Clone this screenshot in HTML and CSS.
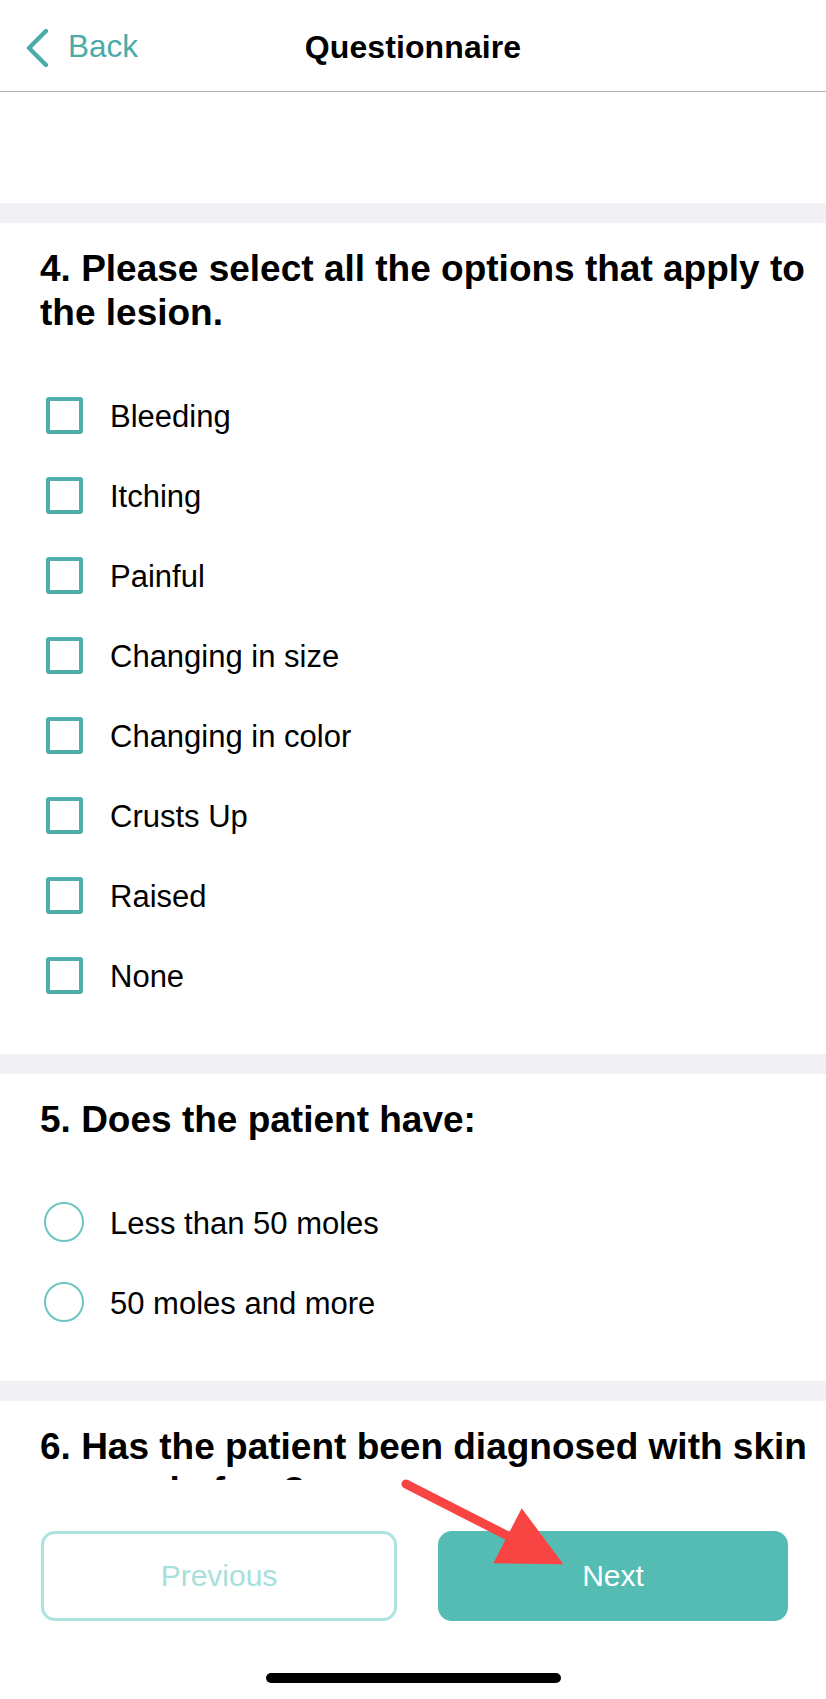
FILE: index.html
```html
<!DOCTYPE html>
<html lang="en">
<head>
<meta charset="utf-8">
<title>Questionnaire</title>
<link rel="stylesheet" href="styles.css">
</head>
<body>
<div class="app">
  <header class="navbar">
    <div class="nav-left">
      <svg class="chevron" viewBox="0 0 28 42" width="28" height="42" aria-hidden="true">
        <polyline points="21,4 4,21 21,38" fill="none" stroke="#4aaba8" stroke-width="4.4" stroke-linecap="round" stroke-linejoin="round"/>
      </svg>
      <span class="back-label">Back</span>
    </div>
    <h1 class="nav-title">Questionnaire</h1>
    <div class="nav-right"></div>
  </header>

  <main class="content">
    <div class="spacer"></div>
    <div class="band"></div>

    <section class="question">
      <h2 class="q-title">4. Please select all the options that apply to the lesion.</h2>
      <ul class="options">
        <li class="option"><span class="icon"><span class="checkbox"></span></span><span class="label">Bleeding</span></li>
        <li class="option"><span class="icon"><span class="checkbox"></span></span><span class="label">Itching</span></li>
        <li class="option"><span class="icon"><span class="checkbox"></span></span><span class="label">Painful</span></li>
        <li class="option"><span class="icon"><span class="checkbox"></span></span><span class="label">Changing in size</span></li>
        <li class="option"><span class="icon"><span class="checkbox"></span></span><span class="label">Changing in color</span></li>
        <li class="option"><span class="icon"><span class="checkbox"></span></span><span class="label">Crusts Up</span></li>
        <li class="option"><span class="icon"><span class="checkbox"></span></span><span class="label">Raised</span></li>
        <li class="option"><span class="icon"><span class="checkbox"></span></span><span class="label">None</span></li>
      </ul>
    </section>

    <div class="band"></div>

    <section class="question">
      <h2 class="q-title">5. Does the patient have:</h2>
      <ul class="options">
        <li class="option"><span class="icon"><span class="radio"></span></span><span class="label">Less than 50 moles</span></li>
        <li class="option"><span class="icon"><span class="radio"></span></span><span class="label">50 moles and more</span></li>
      </ul>
    </section>

    <div class="band"></div>

    <section class="question">
      <h2 class="q-title">6. Has the patient been diagnosed with skin cancer before?</h2>
    </section>
  </main>

  <footer class="footer">
    <div class="buttons">
      <button class="btn btn-prev" type="button">Previous</button>
      <button class="btn btn-next" type="button">Next</button>
    </div>
    <div class="home-indicator"></div>
    <svg class="annotation" viewBox="0 0 190 110" width="190" height="110" aria-hidden="true">
      <line x1="16" y1="19" x2="118" y2="71" stroke="#f94444" stroke-width="9" stroke-linecap="round"/>
      <polygon points="131.7,43.3 103.3,98.3 173.3,99.3" fill="#f94444"/>
    </svg>
  </footer>
</div>
</body>
</html>
```

FILE: styles.css
```css
* {
  box-sizing: border-box;
}

html, body {
  margin: 0;
  padding: 0;
  background: #ffffff;
}

body {
  font-family: "Liberation Sans", Arial, sans-serif;
  color: #000;
}

.app {
  width: 826px;
  height: 1699px;
  display: flex;
  flex-direction: column;
  overflow: hidden;
  position: relative;
}

/* Header */
.navbar {
  flex: 0 0 92px;
  height: 92px;
  display: grid;
  grid-template-columns: 1fr auto 1fr;
  align-items: center;
  border-bottom: 1px solid #b4b4b4;
  padding-top: 3px;
}

.nav-left {
  display: flex;
  align-items: center;
  padding-left: 25px;
}

.chevron {
  display: block;
  margin-top: 1px;
}

.back-label {
  margin-left: 15px;
  font-size: 31.5px;
  color: #4aaba8;
  line-height: 1;
}

.nav-title {
  margin: 0;
  font-size: 32px;
  font-weight: 700;
  line-height: 1;
  letter-spacing: 0.1px;
}

/* Content */
.content {
  flex: 1 1 auto;
  overflow: hidden;
  display: flex;
  flex-direction: column;
}

.spacer {
  flex: 0 0 111px;
}

.band {
  flex: 0 0 20px;
  background: #f0f0f5;
}

.question {
  flex: 0 0 auto;
  padding: 24px 12px 39px 40px;
}

.q-title {
  margin: 0;
  font-size: 37px;
  font-weight: 700;
  line-height: 44px;
}

.options {
  list-style: none;
  margin: 40px 0 0;
  padding: 0 0 0 4px;
}

.option {
  height: 80px;
  display: flex;
  align-items: center;
}

.icon {
  width: 40px;
  height: 40px;
  display: flex;
  align-items: center;
  justify-content: center;
  margin-right: 26px;
}

.checkbox {
  width: 37px;
  height: 37px;
  border: 4px solid #4fadaa;
  border-radius: 3px;
}

.radio {
  width: 40px;
  height: 40px;
  border: 2.5px solid #6cc6c1;
  border-radius: 50%;
}

.label {
  font-size: 31px;
  line-height: 1;
  color: #000;
  padding-top: 2px;
}

/* Footer */
.footer {
  flex: 0 0 219px;
  height: 219px;
  background: #fff;
  position: relative;
  display: flex;
  flex-direction: column;
  align-items: center;
  padding-top: 51px;
}

.buttons {
  width: 100%;
  display: flex;
  gap: 41px;
  padding: 0 38px 0 41px;
}

.btn {
  flex: 1 1 0;
  height: 90px;
  border-radius: 14px;
  font-family: "Liberation Sans", Arial, sans-serif;
  font-size: 30px;
  cursor: pointer;
}

.btn-prev {
  background: #fff;
  border: 3.5px solid #ace3df;
  color: #a6e0db;
}

.btn-next {
  background: #55bcb4;
  border: none;
  color: #fff;
}

.home-indicator {
  margin-top: 52px;
  width: 295px;
  height: 10px;
  border-radius: 5px;
  background: #000;
}

.annotation {
  position: absolute;
  left: 390px;
  top: -15px;
  overflow: visible;
}
```
